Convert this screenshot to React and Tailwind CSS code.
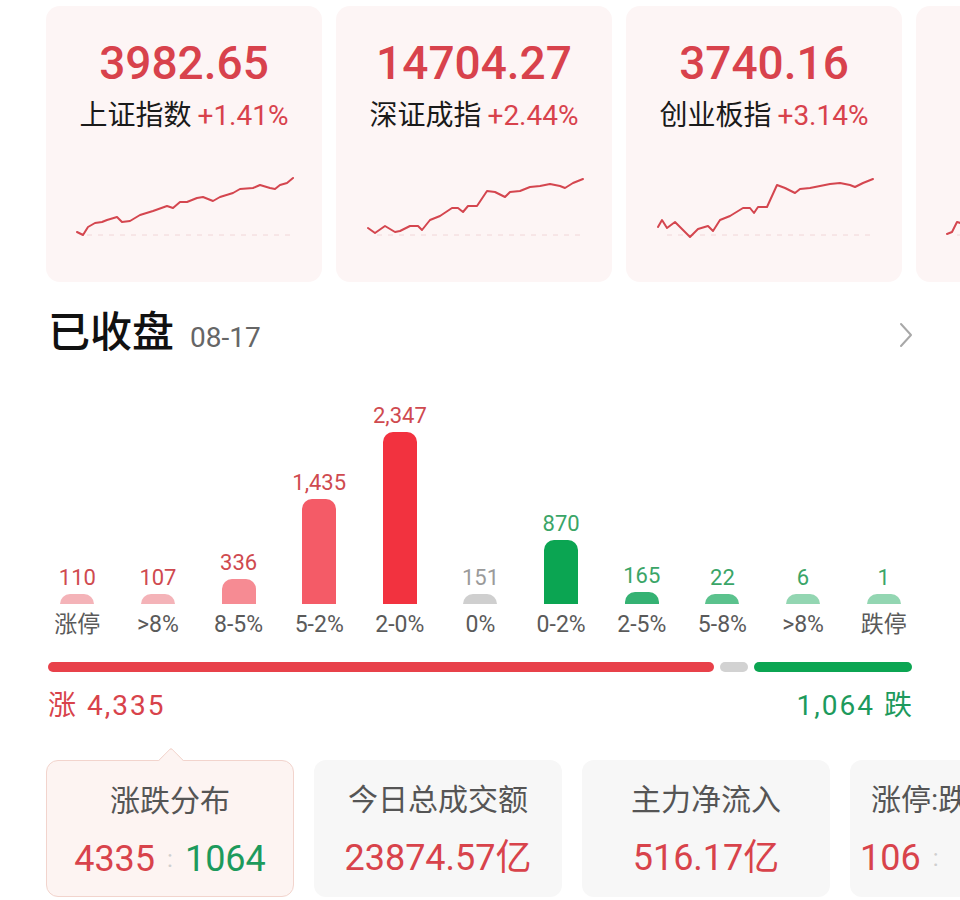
import React from 'react';

const INDEXES = [
  {
    value: '3982.65',
    name: '上证指数',
    change: '+1.41%',
    points: [
      [31, 62], [37, 65], [42, 57], [49, 53], [56, 52], [61, 50], [71, 47], [76, 52], [84, 51], [94, 45],
      [107, 41], [121, 36], [127, 38], [134, 32], [141, 32], [151, 28], [157, 27], [167, 31], [174, 27],
      [187, 23], [194, 19], [207, 18], [214, 15], [224, 18], [229, 19], [234, 15], [241, 13], [247, 8],
    ],
  },
  {
    value: '14704.27',
    name: '深证成指',
    change: '+2.44%',
    points: [
      [32, 58], [39, 63], [49, 56], [59, 62], [64, 61], [74, 56], [82, 56], [86, 60], [94, 50], [104, 46],
      [116, 38], [122, 38], [127, 42], [132, 36], [141, 36], [151, 21], [159, 22], [169, 27], [174, 22],
      [184, 21], [194, 17], [204, 16], [214, 14], [224, 16], [229, 18], [237, 13], [247, 9],
    ],
  },
  {
    value: '3740.16',
    name: '创业板指',
    change: '+3.14%',
    points: [
      [32, 57], [36, 50], [41, 58], [49, 52], [56, 59], [64, 67], [72, 59], [82, 56], [87, 61], [94, 50],
      [104, 46], [117, 38], [124, 38], [128, 43], [132, 37], [141, 37], [151, 15], [159, 18], [169, 23],
      [174, 19], [184, 18], [194, 16], [204, 14], [214, 13], [224, 15], [229, 17], [237, 13], [247, 9],
    ],
  },
  {
    value: '1050.21',
    name: '科创50',
    change: '+1.25%',
    points: [
      [31, 64], [36, 62], [41, 52], [48, 54], [58, 48], [70, 44], [84, 40], [98, 36], [112, 33], [130, 28],
      [150, 24], [170, 20], [190, 17], [210, 14], [230, 12], [247, 8],
    ],
  },
];

const BARS = [
  { label: '涨停', value: '110', h: 10, bar: 'bg-[#f4b3b8]', text: 'text-[#cf4a4f] text-[19px]' },
  { label: '>8%', value: '107', h: 10, bar: 'bg-[#f4b3b8]', text: 'text-[#cf4a4f]' },
  { label: '8-5%', value: '336', h: 25, bar: 'bg-[#f68b93]', text: 'text-[#cf4a4f]' },
  { label: '5-2%', value: '1,435', h: 105, bar: 'bg-[#f45b67]', text: 'text-[#cf4a4f]' },
  { label: '2-0%', value: '2,347', h: 172, bar: 'bg-[#f2323f]', text: 'text-[#cf4a4f]' },
  { label: '0%', value: '151', h: 10, bar: 'bg-[#cfcfcf]', text: 'text-[#9a9a9a]' },
  { label: '0-2%', value: '870', h: 64, bar: 'bg-[#0ba552]', text: 'text-[#3aa567]' },
  { label: '2-5%', value: '165', h: 12, bar: 'bg-[#35b273]', text: 'text-[#3aa567]' },
  { label: '5-8%', value: '22', h: 10, bar: 'bg-[#5bc28d]', text: 'text-[#3aa567]' },
  { label: '>8%', value: '6', h: 10, bar: 'bg-[#93d6b2]', text: 'text-[#3aa567]' },
  { label: '跌停', value: '1', h: 10, bar: 'bg-[#93d6b2]', text: 'text-[#3aa567]' },
];

function Sparkline({ points }) {
  const d = points.map((p) => p.join(',')).join(' ');
  return (
    <svg width="276" height="80" viewBox="0 0 276 80" className="mt-[36px] block">
      <line x1="41" y1="65" x2="247" y2="65" stroke="#f1d6d8" strokeWidth="1" strokeDasharray="5 6" />
      <polyline points={d} fill="none" stroke="#d4464f" strokeWidth="2" strokeLinejoin="round" strokeLinecap="round" />
    </svg>
  );
}

function IndexCard({ item }) {
  return (
    <div className="flex h-[276px] w-[276px] shrink-0 flex-col items-center rounded-[14px] bg-[#fdf5f5] pt-[29px]">
      <div className="text-[46px] font-medium leading-[56px] text-[#d8424c]">{item.value}</div>
      <div className="mt-[7px] flex items-baseline gap-[6px] leading-[36px]">
        <span className="text-[28px] text-[#1a1a1a]">{item.name}</span>
        <span className="text-[28px] text-[#d8424c]">{item.change}</span>
      </div>
      <Sparkline points={item.points} />
    </div>
  );
}

function StatCard({ title, children, active, left }) {
  return (
    <div
      className={`relative flex h-[137px] w-[248px] shrink-0 flex-col rounded-[12px] pt-[20px] ${
        left ? 'items-start' : 'items-center'
      } ${active ? 'border-[1.5px] border-[#f2d4cd] bg-[#fdf4f2]' : 'bg-[#f7f7f7]'}`}
    >
      {active && (
        <div className="absolute left-[115px] top-[-10px] h-[18px] w-[18px] rotate-45 rounded-tl-[3px] border-l-[1.5px] border-t-[1.5px] border-[#f2d4cd] bg-[#fdf4f2]" />
      )}
      <div className={`relative whitespace-nowrap text-[30px] leading-[40px] text-[#555] ${left ? 'pl-[21px]' : ''}`}>{title}</div>
      <div className={`relative mt-[16px] flex items-center whitespace-nowrap text-[36px] leading-[44px] ${left ? 'pl-[10px]' : ''}`}>
        {children}
      </div>
    </div>
  );
}

export default function App() {
  return (
    <div className="h-[900px] w-[960px] overflow-hidden bg-white font-[family-name:Roboto,Noto_Sans_CJK_SC,sans-serif]">
      {/* index cards */}
      <div className="flex gap-[14px] pl-[46px] pt-[6px]">
        {INDEXES.map((item) => (
          <IndexCard key={item.name} item={item} />
        ))}
      </div>

      <div className="px-[48px]">
        {/* header */}
        <div className="mt-[23px] flex h-[56px] items-center justify-between">
          <div className="flex items-baseline gap-[16px]">
            <span className="text-[42px] font-medium leading-[56px] text-[#111]">已收盘</span>
            <span className="text-[28px] text-[#666]">08-17</span>
          </div>
          <svg width="16" height="28" viewBox="0 0 16 28" className="mr-[-2px] mt-[4px]">
            <path d="M3 3 L13 14 L3 25" fill="none" stroke="#a8a8a8" strokeWidth="2" strokeLinecap="round" strokeLinejoin="round" />
          </svg>
        </div>

        {/* distribution chart */}
        <div className="ml-[-11px] w-[887px]">
          <div className="mt-[38px] grid h-[205px] grid-cols-11 items-end">
            {BARS.map((b, i) => (
              <div key={i} className="flex flex-col items-center">
                <div className={`mb-[4px] text-[22px] leading-[24px] ${b.text}`}>{b.value}</div>
                <div className={`w-[34px] rounded-t-[10px] ${b.bar}`} style={{ height: b.h }} />
              </div>
            ))}
          </div>
          <div className="mt-[6px] grid grid-cols-11">
            {BARS.map((b, i) => (
              <div key={i} className="text-center text-[23px] leading-[30px] text-[#5a5a5a]">
                {b.label}
              </div>
            ))}
          </div>
        </div>

        {/* ratio bar */}
        <div className="mt-[22px] flex h-[10px] gap-[6px]">
          <div className="w-[666px] rounded-full bg-[#e8414a]" />
          <div className="w-[28px] rounded-full bg-[#d2d2d2]" />
          <div className="flex-1 rounded-full bg-[#0ba552]" />
        </div>
        <div className="mt-[18px] flex justify-between text-[28px] leading-[32px] tracking-[2px]">
          <span className="text-[#d8434b]">涨 4,335</span>
          <span className="mr-[-2px] text-[#1d9a5c]">1,064 跌</span>
        </div>
      </div>

      {/* stat cards */}
      <div className="mt-[38px] flex gap-[20px] pl-[46px]">
        <StatCard title="涨跌分布" active>
          <span className="text-[#d8434b]">4335</span>
          <span className="mx-[12px] text-[24px] text-[#cfcfcf]">:</span>
          <span className="text-[#1d9a5c]">1064</span>
        </StatCard>
        <StatCard title="今日总成交额">
          <span className="text-[#d8434b]">23874.57亿</span>
        </StatCard>
        <StatCard title="主力净流入">
          <span className="text-[#d8434b]">516.17亿</span>
        </StatCard>
        <StatCard title="涨停:跌停" left>
          <span className="text-[#d8434b]">106</span>
          <span className="ml-[12px] mr-[24px] text-[24px] text-[#cfcfcf]">:</span>
          <span className="text-[#1d9a5c]">1</span>
        </StatCard>
      </div>
    </div>
  );
}
